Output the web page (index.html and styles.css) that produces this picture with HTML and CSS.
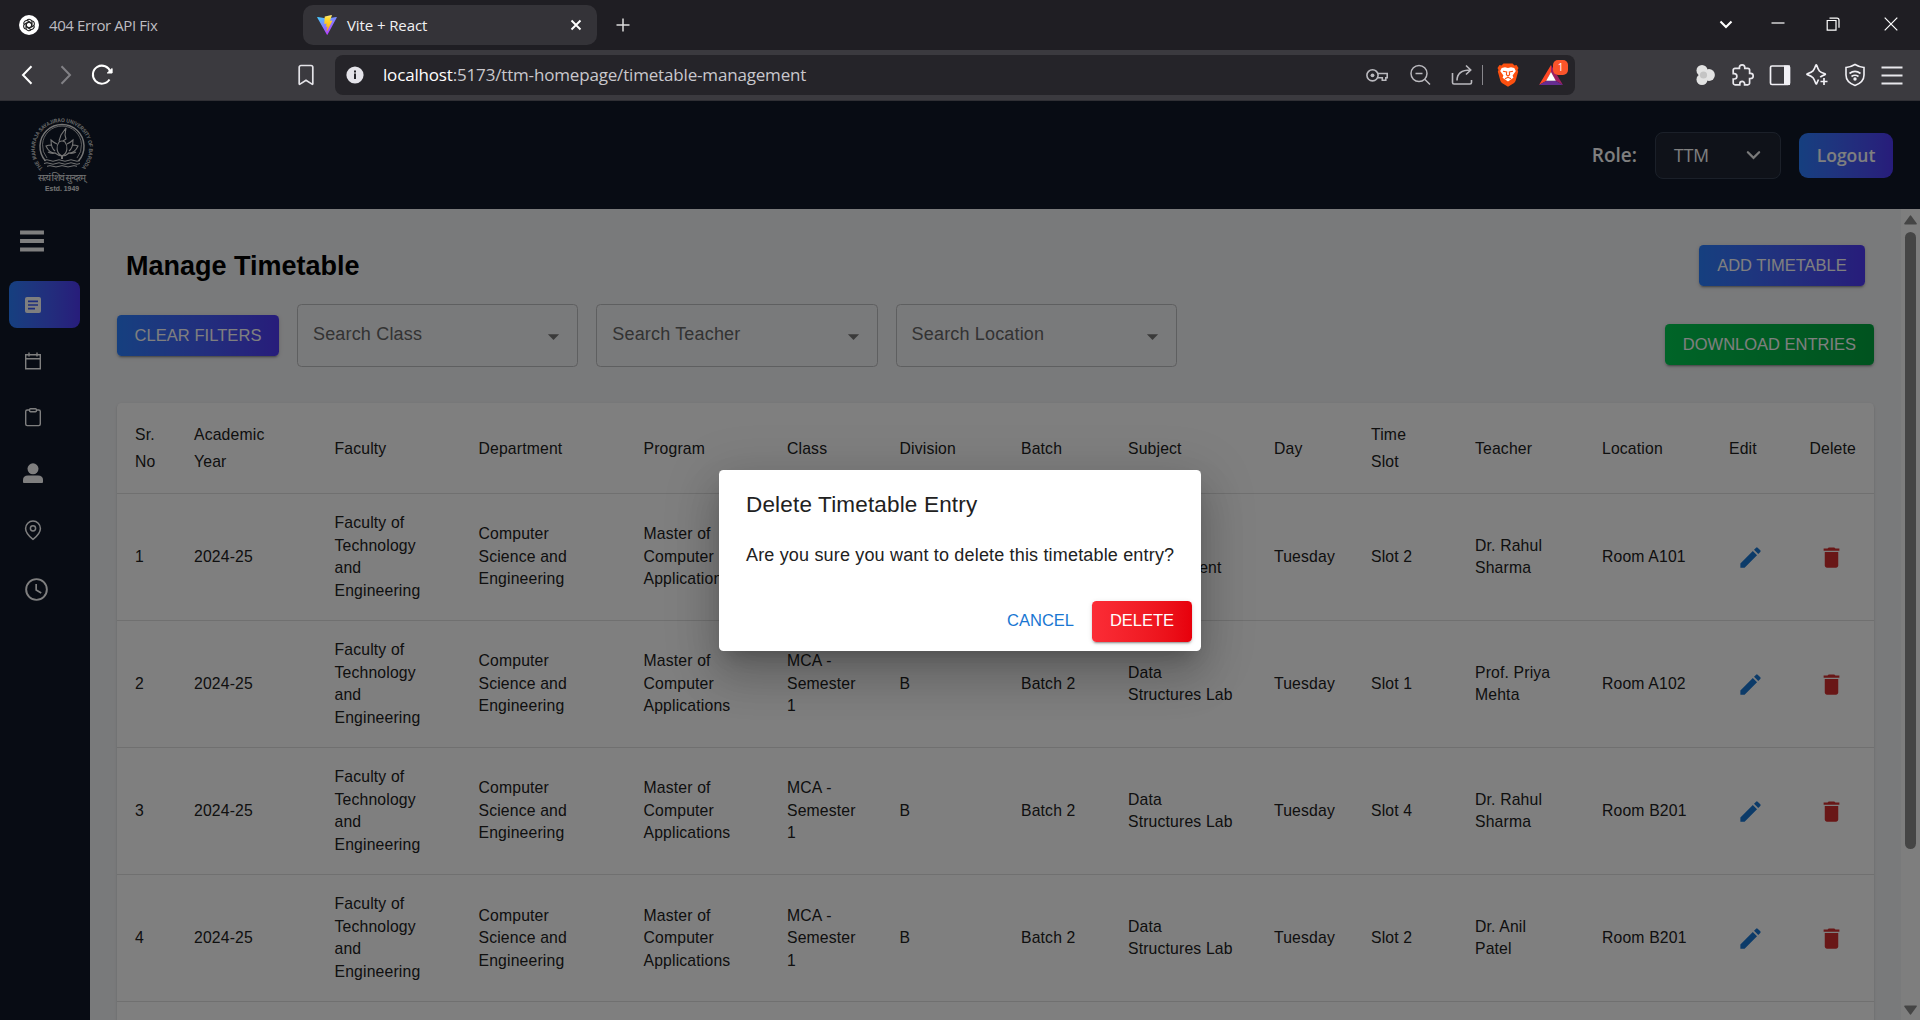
FILE: index.html
```html
<!DOCTYPE html>
<html lang="en">
<head>
<meta charset="utf-8">
<title>Vite + React</title>
<link rel="stylesheet" href="styles.css">
</head>
<body>
<svg class="defs" width="0" height="0">
  <symbol id="edit" viewBox="0 0 24 24"><path d="M3 17.25V21h3.75L17.81 9.94l-3.75-3.75L3 17.25zM20.71 7.04a1 1 0 0 0 0-1.41l-2.34-2.34a1 1 0 0 0-1.41 0l-1.83 1.83 3.75 3.75 1.83-1.83z"/></symbol>
  <symbol id="trash" viewBox="0 0 24 24"><path d="M6 19c0 1.1.9 2 2 2h8c1.1 0 2-.9 2-2V7H6v12zM19 4h-3.5l-1-1h-5l-1 1H5v2h14V4z"/></symbol>
  <symbol id="drop" viewBox="0 0 24 24"><path d="M7 10l5 5 5-5z"/></symbol>
</svg>

<div class="tabstrip">
  <div class="tab">
    <svg class="favicon" viewBox="0 0 20 20"><circle cx="10" cy="10" r="10" fill="#fff"/><g fill="none" stroke="#222" stroke-width="1.1"><path id="petal" d="M8 5.2a2.9 2.9 0 0 1 5 1.6v4.4L9.800 13"/><use href="#petal" transform="rotate(60 10 10)"/><use href="#petal" transform="rotate(120 10 10)"/><use href="#petal" transform="rotate(180 10 10)"/><use href="#petal" transform="rotate(240 10 10)"/><use href="#petal" transform="rotate(300 10 10)"/></g></svg>
    <span class="tab-name tab-a">404 Error API Fix</span>
  </div>
  <div class="tab tab-active">
    <svg class="favicon" viewBox="0 0 20 20"><defs><linearGradient id="va" x1="0" y1="0" x2=".6" y2="1"><stop offset="0" stop-color="#41d1ff"/><stop offset="1" stop-color="#bd34fe"/></linearGradient><linearGradient id="vb" x1="0" y1="0" x2="0" y2="1"><stop offset="0" stop-color="#ffea83"/><stop offset=".2" stop-color="#ffdd35"/><stop offset="1" stop-color="#ffa800"/></linearGradient></defs><path d="M19.800 2.600L10.600 19.600q-.4.600-.8 0L.2 2.600q-.3-.7.5-.7L10 3.500l9.200-1.600q.8 0 .6.700z" fill="url(#va)"/><path d="M14.600.1L8 1.400q-.3 0-.3.400L7.300 8.600q0 .4.400.3l1.900-.4-.6 3q0 .4.400.3l1.200-.3-.9 4.300q0 .7.500.2l5-10q.2-.5-.4-.4l-2 .4L14.900.5q.1-.4-.3-.4z" fill="url(#vb)"/></svg>
    <span class="tab-name tab-b">Vite + React</span>
    <svg class="tab-close" viewBox="0 0 12 12"><path d="M1.500 1.500l9 9m0-9l-9 9" stroke="#fff" stroke-width="1.900"/></svg>
  </div>
  <svg class="plus" viewBox="0 0 14 14"><path d="M7 .5v13M.5 7h13" stroke="#ddd" stroke-width="1.500"/></svg>
  <div class="window-controls">
    <svg viewBox="0 0 14 14"><path d="M1.500 4.500L7 10l5.500-5.500" fill="none" stroke="#fff" stroke-width="2.100"/></svg>
    <svg viewBox="0 0 14 14"><path d="M.5 6h13" stroke="#fff" stroke-width="1.200"/></svg>
    <svg viewBox="0 0 14 14"><path d="M1.200 3.500h8.800v9.700H1.200zM3.500 1.200h7.500a2 2 0 0 1 2 2v7.500" fill="none" stroke="#fff" stroke-width="1.200"/></svg>
    <svg viewBox="0 0 14 14"><path d="M.7.7l12.600 12.600m0-12.600L.7 13.300" stroke="#fff" stroke-width="1.200"/></svg>
  </div>
</div>

<div class="toolbar">
  <svg class="nav-back" viewBox="0 0 12 20"><path d="M10.500 1.200L2 10l8.500 8.800" fill="none" stroke="#fff" stroke-width="2"/></svg>
  <svg class="nav-fwd" viewBox="0 0 12 20"><path d="M1.500 1.200L10 10l-8.500 8.800" fill="none" stroke="#828186" stroke-width="2"/></svg>
  <svg class="reload" viewBox="0 0 24 24"><path d="M19.500 16.500A9 9 0 1 1 20.500 9" fill="none" stroke="#fff" stroke-width="2"/><path d="M17.300 10h4.800V5.500z" fill="#fff" stroke="#fff" stroke-linejoin="round"/></svg>
  <svg class="bookmark" viewBox="0 0 16 22"><path d="M3 1.500h10a1.800 1.800 0 0 1 1.800 1.800v16.500q0 .8-.8.300L8 16.300l-6 3.800q-.8.500-.8-.3V3.300A1.800 1.800 0 0 1 3 1.500z" fill="none" stroke="#e4e3e8" stroke-width="1.700"/></svg>
  <div class="address">
    <svg class="info" viewBox="0 0 18 18"><circle cx="9" cy="9" r="8.600" fill="#e4e3e9"/><path d="M8 7.600h2V13H8zM8 4.500h2v2H8z" fill="#252429"/></svg>
    <span class="url"><b>localhost</b>:5173/ttm-homepage/timetable-management</span>
    <div class="address-icons">
      <svg class="ic-key" viewBox="0 0 24 24"><g fill="none" stroke="#bab9be" stroke-width="1.600"><path d="M12.800 10.500h9.400v4.200h-1.400v2.500h-3.500v-2.500h-4.500"/><circle cx="7.500" cy="12.300" r="5.600"/></g><circle cx="7.500" cy="12.300" r="1.900" fill="#bab9be"/></svg>
      <svg class="ic-zoom" viewBox="0 0 24 24"><g fill="none" stroke="#bab9be" stroke-width="1.500"><circle cx="11" cy="10.500" r="8"/><path d="M16.700 16.200l5.300 5.300M7.500 10.500h7"/></g></svg>
      <svg class="ic-share" viewBox="0 0 24 24"><path d="M2.500 10v9.500a1.500 1.500 0 0 0 1.500 1.500h16a1.500 1.500 0 0 0 1.500-1.500V17M7 17.500c0-7 4.500-10.500 13.500-10.500M16 2.500L20.700 7 16 11.500" fill="none" stroke="#bab9be" stroke-width="1.600"/></svg>
      <span class="divider"></span>
      <svg class="ic-brave" viewBox="0 0 24 24"><path d="M7.500.5h9l2 2 2-.4 2 3-1 2 .7 1.500-2.500 9q-.4 1.400-1.600 2.300L12 23.800l-6.100-3.900q-1.200-.9-1.600-2.300l-2.500-9L2.500 7l-1-2 2-3 2 .4z" fill="#fb5010"/><path d="M12 5l3-.7 3.300.7 1.500 3-3.200 4.500.8 2.300-5.400 3.700-5.400-3.700.8-2.300L4.200 8l1.500-3 3.300-.7z" fill="#fff"/><path d="M7 8.200l3.700.8-.3 2.800 1.600 1.200 1.600-1.200-.3-2.800 3.700-.8M9 15.700l3-1.400 3 1.400" fill="none" stroke="#fb5010" stroke-width="1.100"/></svg>
      <span class="rewards">
        <svg viewBox="0 0 24 20"><path d="M12 0L0 20l7.500-4.300L12 7z" fill="#ff4724"/><path d="M12 0l12 20-7.500-4.300L12 7z" fill="#9e1f63"/><path d="M0 20h24l-7.500-4.300h-9z" fill="#662d91"/><path d="M12 7l4.800 8.700H7.200z" fill="#fff"/></svg>
        <span class="badge">1</span>
      </span>
    </div>
  </div>
  <div class="tools">
    <svg viewBox="0 0 24 24" fill="#e2e2e2"><circle cx="8" cy="7.500" r="5.500"/><circle cx="8" cy="16.500" r="5.500"/><circle cx="15" cy="12" r="5.900"/><circle cx="9.500" cy="12" r="3.600" fill="#c4c4c4"/></svg>
    <svg viewBox="0 0 24 24"><path d="M4 5.300h4.400V4.600a2.700 2.700 0 0 1 5.400 0v.7h3a1.800 1.800 0 0 1 1.800 1.800v3.200h1a2.600 2.600 0 0 1 0 5.200h-1V20a1.800 1.800 0 0 1-1.800 1.800h-3.200v-1a2.400 2.400 0 0 0-4.800 0v1H4A1.800 1.800 0 0 1 2.200 20v-4h1a2.700 2.700 0 0 0 0-5.400h-1V7.100A1.800 1.800 0 0 1 4 5.300z" fill="none" stroke="#e8e7ec" stroke-width="1.700"/></svg>
    <svg viewBox="0 0 24 24"><rect x="2.500" y="3" width="19" height="18.500" rx="1.500" fill="none" stroke="#f1f0f5" stroke-width="1.700"/><path d="M16 2.500h6V22h-6z" fill="#f1f0f5"/></svg>
    <svg viewBox="0 0 24 24"><path d="M10.800 2.300q.4-1 .9 0c2 6 2.400 6.300 8.200 8.500q.9.400 0 .8c-2 .8-3.600 1.500-4.700 2.500M13.500 16.500l-1.800 4q-.5 1-.9 0C8.700 14.600 8.300 13.900 2.400 11.600q-.9-.4 0-.8C8.300 8.500 8.700 8.200 10.800 2.300M19 15v7M15.500 18.500h7" fill="none" stroke="#f1f0f5" stroke-width="1.700"/></svg>
    <svg viewBox="0 0 24 24"><g fill="none" stroke="#f1f0f5" stroke-width="1.600"><path d="M12 1.500q4.500 2.700 9 3v7.500c0 5-3.500 8.500-9 10.500-5.500-2-9-5.500-9-10.500V4.500q4.500-.3 9-3z"/><path d="M6.500 10.500q5.500-4.300 11 0M8.500 13.500q3.500-2.500 7 0"/></g><circle cx="12" cy="16" r="1.700" fill="#f1f0f5"/></svg>
    <svg viewBox="0 0 24 24"><path d="M1.500 4.500h21m-21 8h21m-21 8h21" stroke="#e8e7ec" stroke-width="1.900"/></svg>
  </div>
</div>

<div class="viewport">
  <header class="header">
    <svg class="logo" viewBox="0 0 76 80">
      <defs><path id="ring" d="M18.900 56.100A27 27 0 1 1 57.100 56.100"/></defs>
      <text class="ring-text"><textPath href="#ring" textLength="126" lengthAdjust="spacingAndGlyphs">THE MAHARAJA SAYAJIRAO UNIVERSITY OF BARODA</textPath></text>
      <g fill="none" stroke="#e8e8e8">
        <path d="M21.500 49A22 22 0 1 1 54.500 49" stroke-width="1.500"/><path d="M23 46A19.500 19.500 0 1 1 53 46" stroke-width=".8"/>
        <path d="M20 48.500q3-1.500 6 0t6 0 6 0 6 0 6 0 6 0M20 51.500q3-1.500 6 0t6 0 6 0 6 0 6 0 6 0M23 54.300q3-1.300 6 0t6 0 6 0 6 0 6 0" stroke-width="1"/>
        <path d="M38 44c-6-3-6-10-3-14q3-2 6 0c3 4 3 11-3 14zM33 32q-4-2-6-4 0 8 4 11M43 32q4-2 6-4 0 8-4 11M28 33q-4 0-6 1 3 7 9 7 4 3 7 3 4 0 7-3 6 0 9-7-2-1-6-1M32 41q-5 1-8-1M44 41q5 1 8-1M35 29l2-6 5-7-1 7 1 4-3 2" stroke-width="1.100"/>
        <path d="M38 43v4" stroke-width="2"/>
      </g>
      <text class="motto" x="38" y="68.500" text-anchor="middle" textLength="48">सत्यं शिवं सुन्दरम्</text>
      <text class="estd" x="38" y="78.500" text-anchor="middle" textLength="34">Estd. 1949</text>
    </svg>
    <span class="role">Role:</span>
    <div class="role-select"><span>TTM</span><svg viewBox="0 0 16 10"><path d="M2 2l6 6 6-6" fill="none" stroke="#f2f2f2" stroke-width="2.400" stroke-linecap="round"/></svg></div>
    <div class="logout">Logout</div>
  </header>

  <div class="body">
    <nav class="sidebar">
      <svg class="burger" viewBox="0 0 24 22"><path d="M2 2.500h20m-20 8.500h20m-20 8.500h20" stroke="#fff" stroke-width="3.900" stroke-linecap="square"/></svg>
      <div class="item active"><svg viewBox="0 0 24 24"><path d="M6 4h12a2 2 0 0 1 2 2v12a2 2 0 0 1-2 2H6a2 2 0 0 1-2-2V6a2 2 0 0 1 2-2z" fill="#fff"/><path d="M7 8.300h10M7 12h10M7 15.700h7" stroke="#3b5bf8" stroke-width="1.700"/></svg></div>
      <div class="item"><svg viewBox="0 0 24 24"><path d="M4.700 5.800h14.600v14H4.700zM4.700 9.800h14.600M8 3.500v4m8-4v4" fill="none" stroke="#fff" stroke-width="1.400"/></svg></div>
      <div class="item"><svg viewBox="0 0 24 24"><path d="M8.500 5H6.200a1.500 1.500 0 0 0-1.500 1.500v12.600a1.500 1.500 0 0 0 1.500 1.500h11.600a1.500 1.500 0 0 0 1.500-1.500V6.500A1.500 1.500 0 0 0 17.800 5h-2.300M9.500 3.700h5q.9 0 .9.900v1.200q0 .9-.9.900h-5q-.9 0-.9-.9V4.600q0-.9.900-.9z" fill="none" stroke="#fff" stroke-width="1.400"/></svg></div>
      <div class="item"><svg viewBox="0 0 24 24"><ellipse cx="12" cy="6.800" rx="5.500" ry="5.500" fill="#fff"/><path d="M2 20v-2Q2 13.500 7 13.500h10q5 0 5 4.500V20q0 .9-.9.900H2.900Q2 20.900 2 20z" fill="#fff"/></svg></div>
      <div class="item"><svg viewBox="0 0 24 24"><path d="M12 21.400q-7.400-5.800-7.400-10.900a7.400 7.400 0 0 1 14.800 0Q19.400 15.600 12 21.400z" fill="none" stroke="#fff" stroke-width="1.500"/><circle cx="12" cy="10.300" r="2.600" fill="none" stroke="#fff" stroke-width="1.500"/></svg></div>
      <div class="item item-clock"><svg viewBox="0 0 24 24"><circle cx="12" cy="12" r="9.200" fill="none" stroke="#fff" stroke-width="1.700"/><path d="M11.700 7v5.400l4.500 2.700" fill="none" stroke="#fff" stroke-width="1.500"/></svg></div>
    </nav>

    <main class="main">
      <div class="title-row"><h1>Manage Timetable</h1><div class="btn blue w-add">ADD TIMETABLE</div></div>
      <div class="filters">
        <div class="btn blue w-clear">CLEAR FILTERS</div>
        <div class="field"><span>Search Class</span><svg><use href="#drop"/></svg></div>
        <div class="field"><span>Search Teacher</span><svg><use href="#drop"/></svg></div>
        <div class="field"><span>Search Location</span><svg><use href="#drop"/></svg></div>
        <div class="btn green w-download">DOWNLOAD ENTRIES</div>
      </div>
      <div class="paper">
        <table>
          <colgroup><col class="c1"><col class="c2"><col class="c3"><col class="c4"><col class="c5"><col class="c6"><col class="c7"><col class="c8"><col class="c9"><col class="c10"><col class="c11"><col class="c12"><col class="c13"><col class="c14"><col class="c15"></colgroup>
          <thead><tr><th>Sr.<br>No</th><th>Academic<br>Year</th><th>Faculty</th><th>Department</th><th>Program</th><th>Class</th><th>Division</th><th>Batch</th><th>Subject</th><th>Day</th><th>Time<br>Slot</th><th>Teacher</th><th>Location</th><th>Edit</th><th>Delete</th></tr></thead>
          <tbody>
            <tr><td>1</td><td>2024-25</td><td>Faculty of<br>Technology<br>and<br>Engineering</td><td>Computer<br>Science and<br>Engineering</td><td>Master of<br>Computer<br>Applications</td><td></td><td></td><td></td><td><br>Management</td><td>Tuesday</td><td>Slot 2</td><td>Dr. Rahul<br>Sharma</td><td>Room A101</td><td><svg class="edit"><use href="#edit"/></svg></td><td><svg class="trash"><use href="#trash"/></svg></td></tr>
            <tr><td>2</td><td>2024-25</td><td>Faculty of<br>Technology<br>and<br>Engineering</td><td>Computer<br>Science and<br>Engineering</td><td>Master of<br>Computer<br>Applications</td><td>MCA -<br>Semester<br>1</td><td>B</td><td>Batch 2</td><td>Data<br>Structures Lab</td><td>Tuesday</td><td>Slot 1</td><td>Prof. Priya<br>Mehta</td><td>Room A102</td><td><svg class="edit"><use href="#edit"/></svg></td><td><svg class="trash"><use href="#trash"/></svg></td></tr>
            <tr><td>3</td><td>2024-25</td><td>Faculty of<br>Technology<br>and<br>Engineering</td><td>Computer<br>Science and<br>Engineering</td><td>Master of<br>Computer<br>Applications</td><td>MCA -<br>Semester<br>1</td><td>B</td><td>Batch 2</td><td>Data<br>Structures Lab</td><td>Tuesday</td><td>Slot 4</td><td>Dr. Rahul<br>Sharma</td><td>Room B201</td><td><svg class="edit"><use href="#edit"/></svg></td><td><svg class="trash"><use href="#trash"/></svg></td></tr>
            <tr><td>4</td><td>2024-25</td><td>Faculty of<br>Technology<br>and<br>Engineering</td><td>Computer<br>Science and<br>Engineering</td><td>Master of<br>Computer<br>Applications</td><td>MCA -<br>Semester<br>1</td><td>B</td><td>Batch 2</td><td>Data<br>Structures Lab</td><td>Tuesday</td><td>Slot 2</td><td>Dr. Anil<br>Patel</td><td>Room B201</td><td><svg class="edit"><use href="#edit"/></svg></td><td><svg class="trash"><use href="#trash"/></svg></td></tr>
          </tbody>
        </table>
      </div>
    </main>
    <div class="scrollbar">
      <svg viewBox="0 0 13 10"><path d="M6.500 1.200L12 8.800H1z" fill="#8b8b8b" stroke="#8b8b8b" stroke-width="1.600" stroke-linejoin="round"/></svg>
      <span class="thumb"></span>
      <svg viewBox="0 0 13 10"><path d="M6.500 8.800L12 1.200H1z" fill="#8b8b8b" stroke="#8b8b8b" stroke-width="1.600" stroke-linejoin="round"/></svg>
    </div>
  </div>

  <div class="backdrop">
    <div class="dialog">
      <h2>Delete Timetable Entry</h2>
      <p>Are you sure you want to delete this timetable entry?</p>
      <div class="actions"><div class="btn-text">CANCEL</div><div class="btn red">DELETE</div></div>
    </div>
  </div>
</div>
</body>
</html>
```
FILE: styles.css
```css
* { box-sizing: border-box; }
body { margin: 0; width: 1920px; height: 1020px; overflow: hidden; display: flex; flex-direction: column; font-family: "Liberation Sans", Arial, sans-serif; }
svg { display: block; flex: none; }
.defs { display: none; }

/* browser chrome */
.tabstrip { height: 50px; background: #1f1e23; display: flex; align-items: center; font-family: "Open Sans", sans-serif; flex: none; }
.tab { width: 284px; padding-left: 19px; height: 40px; margin-right: 19px; display: flex; align-items: center; }
.tab-active { width: 294px; padding-left: 14px; margin-right: 18px; border-radius: 10px; background: #343338; }
.favicon { width: 20px; height: 20px; }
.tab-name { font-size: 15px; margin-left: 10px; white-space: nowrap; }
.tab-a { color: #bdbcc1; letter-spacing: -.4px; }
.tab-b { color: #f1f1f3; letter-spacing: -.1px; }
.tab-close { width: 12px; height: 12px; margin: 0 15px 0 auto; }
.plus { width: 14px; height: 14px; margin-left: .5px; }
.window-controls { display: flex; margin: -2px 22px 0 auto; }
.window-controls svg { width: 14px; height: 14px; margin-left: 38px; }
.window-controls svg:nth-child(3) { margin-left: 41px; }
.window-controls svg:nth-child(4) { margin-left: 44px; }

.toolbar { height: 51px; background: #3b3a3f; border-bottom: 1px solid #303035; display: flex; align-items: center; flex: none; }
.nav-back { width: 12px; height: 20px; margin-left: 21px; }
.nav-fwd { width: 12px; height: 20px; margin-left: 27px; }
.reload { width: 24px; height: 24px; margin-left: 18px; }
.bookmark { width: 16px; height: 22px; margin-left: 184px; }
.address { width: 1240px; height: 40px; margin-left: 21px; border-radius: 8px; background: #252429; display: flex; align-items: center; padding: 0 12px 0 11px; }
.info { width: 18px; height: 18px; }
.url { margin-left: 19px; font: 17px/24px "Open Sans", sans-serif; letter-spacing: -.17px; color: #c9c8cd; white-space: nowrap; }
.url b { font-weight: 400; color: #fff; }
.address-icons { margin-left: auto; display: flex; align-items: center; }
.address-icons svg { width: 24px; height: 24px; }
.ic-zoom, .ic-share { margin-left: 18.500px; }
.divider { width: 1px; height: 20px; margin: 0 13px 0 8px; background: #88878c; }
.rewards { position: relative; margin-left: 19px; }
.address-icons .rewards svg { width: 24px; height: 20px; }
.badge { position: absolute; left: 14px; top: -5px; width: 15px; height: 15px; border-radius: 5px; background: #fb542b; color: #fff; font: 10px/15px "Open Sans", sans-serif; text-align: center; }
.tools { margin: 0 16px 0 auto; display: flex; gap: 13.300px; }
.tools svg { width: 24px; height: 24px; }

/* application */
.viewport { position: relative; flex: 1; min-height: 0; display: flex; flex-direction: column; overflow: hidden; }
.header { height: 108px; flex: none; background: #101828; display: flex; align-items: center; padding: 0 27px 0 24px; font-family: "Open Sans", sans-serif; color: #fff; }
.logo { width: 76px; height: 80px; margin: -7px auto 0 0; overflow: visible; }
.ring-text { font: 700 5.500px "Liberation Sans", sans-serif; fill: #d8d8d8; }
.motto { font: 9.500px "Noto Sans Devanagari", "Noto Sans", sans-serif; fill: #e8e8e8; }
.estd { font: 700 6.800px "Liberation Sans", sans-serif; fill: #e8e8e8; }
.role { font-size: 19px; font-weight: 600; letter-spacing: 0; margin-right: 18px; }
.role-select { width: 126px; height: 47px; border: 1px solid #364153; border-radius: 8px; background: #1e2533; padding: 0 19px 0 18px; margin-right: 18px; display: flex; align-items: center; justify-content: space-between; font-size: 17.500px; }
.role-select svg { width: 15px; height: 10px; }
.logout { width: 94px; height: 45px; line-height: 45px; border-radius: 9px; text-align: center; font-size: 17.500px; font-weight: 600; background: linear-gradient(to right in oklab, #2b7fff, #4f39f6); }

.body { flex: 1; min-height: 0; display: flex; }
.sidebar { width: 90px; flex: none; background: #101828; padding: 20.500px 10px 0 9px; display: flex; flex-direction: column; gap: 9.300px; }
.burger { width: 24px; height: 22px; margin: 0 0 20.500px 10.500px; }
.item { height: 47px; flex: none; border-radius: 8px; display: flex; align-items: center; padding-left: 12px; }
.active { background: linear-gradient(to right in oklab, #2b7fff, #4f39f6); }
.item svg { width: 24px; height: 24px; }
.item-clock { height: 53px; }
.item-clock svg { width: 27px; height: 27px; margin-left: 2px; }

.main { flex: 1; min-width: 0; background: #f3f4f6; padding: 36px 27px 0; }
.title-row { display: flex; justify-content: space-between; align-items: flex-start; padding: 0 9px; height: 59px; }
h1 { margin: 0; font-size: 27px; line-height: 43px; font-weight: 700; color: #000; white-space: nowrap; }
.btn { height: 41px; line-height: 40px; flex: none; border-radius: 4.500px; text-align: center; color: #fff; font-size: 16.500px; white-space: nowrap; box-shadow: 0 3px 1px -2px rgba(0,0,0,.2), 0 2px 2px rgba(0,0,0,.14), 0 1px 5px rgba(0,0,0,.12); }
.blue { background: linear-gradient(to right in oklab, #2b7fff, #4f39f6); }
.green { background: linear-gradient(to right in oklab, #00c950, #00a63e); }
.red { width: 100px; background: linear-gradient(to right in oklab, #fb2c36, #e7000b); }
.w-add { width: 166px; }
.w-clear { width: 162px; margin-top: 11px; letter-spacing: .05px; }
.w-download { width: 209px; margin: 20px 0 0 auto; }
.filters { display: flex; gap: 18px; align-items: flex-start; height: 99px; }
.field { width: 281.300px; height: 63px; border: 1px solid #bdbec0; border-radius: 4.500px; padding: 16px 10px 0 15px; display: flex; justify-content: space-between; font-size: 18px; line-height: 27px; letter-spacing: .17px; color: #666; }
.field svg { width: 27px; height: 27px; margin-top: 2px; fill: #757575; }
.paper { background: #fff; border-radius: 4.500px; height: 700px; box-shadow: 0 2px 1px -1px rgba(0,0,0,.2), 0 1px 1px rgba(0,0,0,.14), 0 1px 3px rgba(0,0,0,.12); }
table { width: 1757px; table-layout: fixed; border-collapse: separate; border-spacing: 0; font-size: 15.750px; letter-spacing: .16px; color: #212121; }
th, td { padding: 0 0 0 18px; text-align: left; font-weight: 400; white-space: nowrap; border-bottom: 1px solid #e0e0e0; vertical-align: middle; }
th { height: 91px; line-height: 27px; }
td { height: 127.100px; line-height: 22.520px; }
.c1 { width: 59px; } .c2 { width: 140.500px; } .c3 { width: 144px; } .c4 { width: 165px; } .c5 { width: 143.500px; }
.c6 { width: 112.500px; } .c7 { width: 121.500px; } .c8 { width: 107px; } .c9 { width: 146px; } .c10 { width: 97px; }
.c11 { width: 104px; } .c12 { width: 127px; } .c13 { width: 127px; } .c14 { width: 80.500px; } .c15 { width: 82.500px; }
.edit, .trash { width: 27px; height: 27px; margin-left: 8px; }
.edit { fill: #1976d2; }
.trash { fill: #d32f2f; }

.scrollbar { width: 19px; flex: none; background: #fcfcfc; display: flex; flex-direction: column; align-items: center; padding: 6px 0 5px; }
.scrollbar svg { width: 13px; height: 10px; }
.thumb { width: 11px; height: 617px; border-radius: 6px; background: #8b8b8b; margin: 7px 0 auto; }

/* confirmation dialog */
.backdrop { position: absolute; inset: 0; background: rgba(0,0,0,.5); display: flex; align-items: center; justify-content: center; }
.dialog { width: 482px; height: 181px; background: #fff; border-radius: 4.500px; color: #212121; box-shadow: 0 12px 17px -8px rgba(0,0,0,.2), 0 27px 43px 3px rgba(0,0,0,.14), 0 10px 52px 9px rgba(0,0,0,.12); }
.dialog h2 { margin: 0; padding: 17px 27px 19px; font-size: 22.500px; line-height: 36px; font-weight: 400; letter-spacing: .17px; }
.dialog p { margin: 0; padding: 0 27px 23px; font-size: 18px; line-height: 27px; letter-spacing: .17px; white-space: nowrap; }
.actions { padding: 9px; display: flex; justify-content: flex-end; gap: 9px; }
.btn-text { padding: 0 9px; line-height: 38px; font-size: 16.500px; color: #1976d2; }
.red { line-height: 38px; }
```
